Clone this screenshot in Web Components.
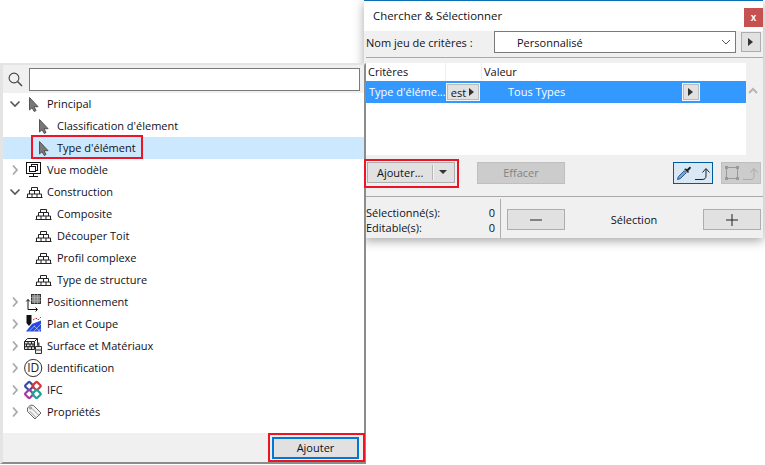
<!DOCTYPE html>
<html lang="fr">
<head>
<meta charset="UTF-8">
<title>Chercher &amp; Sélectionner</title>
<style>
  html, body { margin: 0; height: 100%; background: #fff; overflow: hidden; }
  body { font: 11px "Open Sans", "Noto Sans", sans-serif; color: #10101a; }
</style>
</head>
<body>
  <search-dialog></search-dialog>
  <tree-panel></tree-panel>
  <red-box x="31" y="135" w="112" h="24"></red-box>
  <red-box x="364" y="159" w="95" h="29"></red-box>
  <red-box x="268" y="433" w="97" h="29"></red-box>

<script>
const ICONS = {
  cursor: `<path d="M3.500 2.500v12.500l2.600-2.300 2.100 3.800 1.900-1-2.100-3.800h4.100z" fill="#787878" stroke="#4a4a4a" stroke-width=".9"/>`,
  model: `<g fill="none" stroke="#111"><rect x=".5" y="1.500" width="14" height="11"/><rect x="5.500" y="3.500" width="6" height="6"/><rect x="3.500" y="5.500" width="6" height="5" fill="#fff"/><path d="M7.500 12.500v3M3 15.500h9"/></g>`,
  bricks: `<g fill="none" stroke="#222"><path d="M.5 14.500h16M1.500 14.500v-3.500h14v3.500M3.500 11V7.500h10V11M5.500 7.500V4.500h6v3M6 11v3.500M11 11v3.500M8.500 7.500V11"/></g>`,
  position: `<rect x="5.500" y="1.500" width="9" height="9" fill="#8a8a8a" stroke="#333"/><path d="M5.500 4.500l9 0M5.500 7.500l9 0M8.500 1.500v9M11.500 1.500v9" stroke="#bbb" stroke-dasharray="1 1"/><path d="M2 6.500v10h9M.2 8.500L2 6.500l1.800 2M9.500 14.500l2 2-2 2" fill="none" stroke="#111"/>`,
  plan: `<path d="M0 16.500L6 9l9-3.500v11z" fill="#2448e0"/><path d="M3 16.500l6-6M7.500 16.500l7.500-7.500M12 16.500l3-3M8 11l6 5.500" stroke="#dfe6ff" stroke-width=".6"/><path d="M.5 0h5v8L3 11 .5 8z" fill="#111"/><path d="M7 5l3-2 2 2 3-3" fill="none" stroke="#c8343c" stroke-dasharray="2 1"/>`,
  surface: `<g stroke="#222" fill="none"><path d="M-1.500 4.500h10v8h-10z" fill="#ddd"/><path d="M-1.500 4.500l3-3h10l-3 3M11.500 1.500v7"/><path d="M-1.500 7h10M-1.500 9.700h10M2 4.500V7M5.500 4.500V7M.5 7v2.700M4 7v2.700M7 7v2.700M2 9.700v2.800M5.500 9.700v2.800"/></g><rect x="11.500" y="5.500" width="2" height="4" fill="#555"/><path d="M9.500 9.500h6v7h-6z" fill="#eee" stroke="#333"/><path d="M9.500 13h6" stroke="#333"/>`,
  id: `<circle cx="7.200" cy="9" r="8.600" fill="#fff" stroke="#333"/><text x="7.200" y="13" text-anchor="middle" font-family="Open Sans" font-size="12" fill="#222">ID</text>`,
  ifc: `<g fill="none" stroke-width="2.200"><rect x="0" y="1.800" width="6.400" height="6.400" rx="1" transform="rotate(45 3.200 5)" stroke="#3a4aa8"/><rect x="7.400" y="1.800" width="6.400" height="6.400" rx="1" transform="rotate(45 10.600 5)" stroke="#d8343c"/><rect x="0" y="9.800" width="6.400" height="6.400" rx="1" transform="rotate(45 3.200 13)" stroke="#a23a9c"/><rect x="7.400" y="9.800" width="6.400" height="6.400" rx="1" transform="rotate(45 10.600 13)" stroke="#1aa39a"/></g>`,
  tag: `<g stroke="#666" fill="#f2f2f2"><path d="M1.500 5l3-3 3 .5 7.500 7.500-6 6-7.500-7.500z"/><path d="M3.500 8l7 7M6 5.500l7 7" fill="none" stroke="#999"/></g><circle cx="4.500" cy="5" r="1" fill="#fff" stroke="#555" stroke-width=".7"/>`
}

function icon(name, level) {
  const nudge = name == "bricks" && level ? "margin-left:-1px;" : ""
  return `<svg width="18" height="18" viewBox="0 0 18 18" style="overflow:visible;${nudge}">${ICONS[name]}</svg>`
}

const CHEVRONS = {
  open: `<svg width="12" height="12" viewBox="0 0 12 12"><path d="M1.500 3.500L6 8l4.500-4.500" fill="none" stroke="#555" stroke-width="1.600"/></svg>`,
  closed: `<svg width="12" height="12" viewBox="0 0 12 12"><path d="M4 1.500L8 6l-4 4.500" fill="none" stroke="#aaa" stroke-width="1.800"/></svg>`
}

customElements.define("red-box", class extends HTMLElement {
  constructor() {
    super()
    const root = this.attachShadow({ mode: "open" })
    const attr = name => this.getAttribute(name) + "px"
    root.innerHTML = `
      <style>
        :host {
          position: absolute; z-index: 2; box-sizing: border-box; border: 2px solid #ec1425;
          left: ${attr("x")}; top: ${attr("y")}; width: ${attr("w")}; height: ${attr("h")};
        }
      </style>`
  }
})

customElements.define("tree-row", class extends HTMLElement {
  constructor() {
    super()
    const root = this.attachShadow({ mode: "open" })
    const toggle = this.getAttribute("toggle")
    const level = Number(this.getAttribute("level") || 0)
    root.innerHTML = `
      <style>
        :host { display: flex; align-items: center; height: 22px; padding-left: ${6 + level * 10}px; }
        :host([selected]) { background: #cce8ff; }
        .toggle { width: 17px; display: flex; flex: none; }
        .icon { width: 21px; height: 18px; display: flex; flex: none; }
        .label { white-space: nowrap; padding-bottom: 2px; }
      </style>
      <span class="toggle">${toggle ? CHEVRONS[toggle] : ""}</span>
      <span class="icon">${icon(this.getAttribute("icon"), level)}</span>
      <span class="label"><slot></slot></span>`
  }
})

customElements.define("tree-panel", class extends HTMLElement {
  constructor() {
    super()
    const root = this.attachShadow({ mode: "open" })
    root.innerHTML = `
      <style>
        :host {
          position: absolute; z-index: 1; left: 0; top: 63px; width: 366px; height: 401px;
          display: flex; flex-direction: column; box-sizing: border-box;
          border-style: solid; border-color: #e4e4e4 #8c8c8c #8c8c8c #e4e4e4; border-width: 2px 2px 2px 3px;
          background: #fff;
        }
        .search { height: 28px; background: #f0f0f0; display: flex; align-items: center; padding: 0 4px 0 3px; flex: none; }
        .search svg { flex: none; margin-right: 3px; }
        .search input { flex: 1; height: 23px; box-sizing: border-box; border: 1px solid #7a7a7a; background: #fff; min-width: 0; margin: 0; }
        .tree { flex: 1; }
        .foot { height: 29px; box-sizing: border-box; background: #f0f0f0; display: flex; justify-content: flex-end; padding: 4px 5px 3px 0; flex: none; }
        .add { width: 87px; box-sizing: border-box; border: 2px solid #0078d7; background: #e1e1e1; display: flex; align-items: center; justify-content: center; padding-bottom: 1px; }
      </style>
      <div class="search">
        <svg width="20" height="20" viewBox="0 0 20 20"><circle cx="8" cy="9" r="4.900" fill="none" stroke="#444" stroke-width="1.100"/><path d="M11.500 12.500l4.500 4.500" stroke="#444" stroke-width="1.400"/></svg>
        <input type="text">
      </div>
      <div class="tree">
        <tree-row toggle="open" icon="cursor">Principal</tree-row>
        <tree-row level="1" icon="cursor">Classification d'élement</tree-row>
        <tree-row level="1" icon="cursor" selected>Type d'élément</tree-row>
        <tree-row toggle="closed" icon="model">Vue modèle</tree-row>
        <tree-row toggle="open" icon="bricks">Construction</tree-row>
        <tree-row level="1" icon="bricks">Composite</tree-row>
        <tree-row level="1" icon="bricks">Découper Toit</tree-row>
        <tree-row level="1" icon="bricks">Profil complexe</tree-row>
        <tree-row level="1" icon="bricks">Type de structure</tree-row>
        <tree-row toggle="closed" icon="position">Positionnement</tree-row>
        <tree-row toggle="closed" icon="plan">Plan et Coupe</tree-row>
        <tree-row toggle="closed" icon="surface">Surface et Matériaux</tree-row>
        <tree-row toggle="closed" icon="id">Identification</tree-row>
        <tree-row toggle="closed" icon="ifc">IFC</tree-row>
        <tree-row toggle="closed" icon="tag">Propriétés</tree-row>
      </div>
      <div class="foot"><div class="add">Ajouter</div></div>`
  }
})

customElements.define("ui-button", class extends HTMLElement {
  constructor() {
    super()
    const root = this.attachShadow({ mode: "open" })
    root.innerHTML = `
      <style>
        :host { display: inline-flex; align-items: center; justify-content: center; box-sizing: border-box; height: 22px; border: 1px solid #adadad; background: #e1e1e1; flex: none; }
        :host([disabled]) { background: #ccc; color: #838383; border-color: #bfbfbf; }
      </style><slot></slot>`
  }
})

const TRI = `<svg width="6" height="8" viewBox="0 0 6 8"><path d="M0 0l5 4-5 4z" fill="#333"/></svg>`
const ARROW = color => `<path d="M20 15.500h7c3 0 4-1.500 4-3.500V5M27.500 8.500L31 4.500l3.500 4" fill="none" stroke="${color}"/>`

customElements.define("search-dialog", class extends HTMLElement {
  constructor() {
    super()
    const root = this.attachShadow({ mode: "open" })
    root.innerHTML = `
      <style>
        :host {
          position: absolute; left: 364px; top: 0; width: 399px; height: 238px; box-sizing: border-box;
          background: #f0f0f0; display: flex; flex-direction: column; padding-left: 2px;
          border-top: 1px solid #0a6fb5; box-shadow: 0 3px 10px rgba(0,0,0,.35);
        }
        .title { height: 30px; box-sizing: border-box; background: #fff; display: flex; justify-content: space-between; margin-left: -2px; padding: 7px 0 0 9px; flex: none; font-size: 11.400px; }
        .close { width: 19px; height: 19px; background: #c75050; color: #fff; display: flex; align-items: center; justify-content: center; font: bold 10px "Liberation Sans", sans-serif; }
        .name { display: flex; align-items: center; height: 26px; box-sizing: border-box; padding-bottom: 4px; flex: none; }
        .name .lbl { width: 128px; }
        .combo { width: 242px; height: 22px; box-sizing: border-box; border: 1px solid #7a7a7a; background: #fff; display: flex; align-items: center; justify-content: space-between; padding: 0 4px 0 22px; }
        .name ui-button { width: 20px; height: 20px; margin-left: 5px; }
        .sep { height: 1px; background: #a9a9a9; flex: none; }
        .body { display: flex; height: 92px; flex: none; margin-top: 5px; }
        .grid { width: 380px; background: #fff; flex: none; }
        .head { display: grid; grid-template-columns: 80px 36px 1fr; height: 18px; align-items: center; }
        .head span { height: 100%; box-sizing: border-box; padding: 0 0 2px 2px; border-right: 1px solid #eee; display: flex; align-items: center; }
        .sel { display: flex; align-items: center; height: 22px; background: #3399ff; color: #fff; }
        .sel .crit { width: 80px; padding: 0 0 2px 3px; box-sizing: border-box; white-space: nowrap; }
        .chip { width: 34px; height: 18px; box-sizing: border-box; border: 1px solid #f4f4f4; box-shadow: inset 0 0 0 1px #bbb; background: #e1e1e1; color: #111; display: flex; gap: 3px; align-items: center; justify-content: center; flex: none; }
        .val { flex: 1; padding: 0 0 2px 28px; }
        .chip.s { width: 18px; margin-right: 46px; }
        .scroll { flex: 1; display: flex; justify-content: center; padding: 24px 3px 0 0; }
        .actions { display: flex; align-items: center; height: 41px; flex: none; }
        .actions > * { margin-top: -6px; }
        .add { margin-left: 1px; width: 88px; height: 21px; justify-content: flex-start; padding: 0 0 1px 9px; }
        .divider { width: 1px; height: 15px; background: #b5b5b5; box-shadow: 1px 0 #f5f5f5; margin: 0 6px 0 9px; }
        .tools { margin-left: auto; display: flex; gap: 8px; padding-right: 2px; }
        .tool { width: 40px; height: 22px; box-sizing: border-box; border: 1px solid #005a9e; background: #d9e8f5; display: flex; align-items: center; justify-content: center; }
        .tool.off { background: #ccc; border-color: #bfbfbf; }
        .stats { flex: 1; display: flex; padding-top: 2px; }
        .counts { width: 134px; padding: 6px 5px 0 0; box-sizing: border-box; line-height: 15px; }
        .counts div { display: flex; justify-content: space-between; }
        .rule { border-left: 1px solid #adadad; height: 39px; }
        .selection { flex: 1; display: flex; align-items: center; justify-content: space-between; padding: 0 2px 0 6px; height: 21px; margin-top: 10px; }
        .selection ui-button { height: 21px; }
      </style>
      <div class="title"><span>Chercher &amp; Sélectionner</span><span class="close">x</span></div>
      <div class="name">
        <span class="lbl">Nom jeu de critères :</span>
        <div class="combo"><span>Personnalisé</span><svg width="10" height="6" viewBox="0 0 10 6"><path d="M1 1l4 4 4-4" fill="none" stroke="#555"/></svg></div>
        <ui-button>${TRI}</ui-button>
      </div>
      <div class="sep"></div>
      <div class="body">
        <div class="grid">
          <div class="head"><span>Critères</span><span></span><span style="border:0">Valeur</span></div>
          <div class="sel"><span class="crit">Type d'éléme...</span><span class="chip">est ${TRI}</span><span class="val">Tous Types</span><span class="chip s">${TRI}</span></div>
        </div>
        <div class="scroll"><svg width="10" height="8" viewBox="0 0 10 8"><path d="M1 6l4-4 4 4" fill="none" stroke="#b5b5b5" stroke-width="2"/></svg></div>
      </div>
      <div class="actions">
        <ui-button class="add">Ajouter...<span class="divider"></span><svg width="8" height="4" viewBox="0 0 8 4"><path d="M0 0h8L4 4z" fill="#333"/></svg></ui-button>
        <ui-button disabled style="width:88px;margin-left:22px;padding-bottom:1px">Effacer</ui-button>
        <div class="tools">
          <div class="tool"><svg width="36" height="18" viewBox="0 0 36 18"><path d="M2.500 15.500l.8-2.800 6-6 2 2-6 6z" fill="#6ea6e0" stroke="#1d3f70" stroke-width=".8"/><path d="M9 5l4 4 1-1-.8-1 2.300-2.300c1-1 0-2.700-1.200-1.700L12 5.300l-1-.8z" fill="#222"/>${ARROW("#222")}</svg></div>
          <div class="tool off"><svg width="36" height="18" viewBox="0 0 36 18"><rect x="3.500" y="3.500" width="11" height="11" fill="none" stroke="#999"/><g fill="#999"><rect x="2" y="2" width="3" height="3"/><rect x="13" y="2" width="3" height="3"/><rect x="2" y="13" width="3" height="3"/><rect x="13" y="13" width="3" height="3"/></g>${ARROW("#aaa")}</svg></div>
        </div>
      </div>
      <div class="sep"></div>
      <div class="stats">
        <div class="counts"><div><span>Sélectionné(s):</span><span>0</span></div><div><span>Editable(s):</span><span>0</span></div></div>
        <div class="rule"></div>
        <div class="selection">
          <ui-button style="width:58px"><svg width="14" height="2"><path d="M1 1h12" stroke="#222"/></svg></ui-button>
          <span>Sélection</span>
          <ui-button style="width:58px"><svg width="14" height="14"><path d="M1 7h12M7 1v12" stroke="#222"/></svg></ui-button>
        </div>
      </div>`
  }
})
</script>
</body>
</html>
